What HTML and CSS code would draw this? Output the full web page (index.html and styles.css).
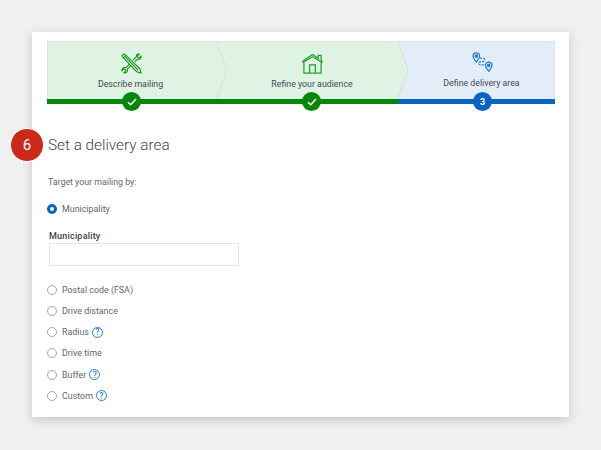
FILE: index.html
```html
<!DOCTYPE html>
<html lang="en">
<head>
<meta charset="utf-8">
<title>Set a delivery area</title>
<link rel="stylesheet" href="styles.css">
</head>
<body>
<main class="card">
  <div class="stepper">
    <svg class="stepper-bg" width="508" height="63" viewBox="0 0 508 63" aria-hidden="true">
      <rect x="0" y="0" width="508" height="58" fill="#e3edf8"/>
      <path d="M351 0L361 29L351 58H0V0Z" fill="#dff3e4"/>
      <path d="M351 0L361 29L351 58" fill="none" stroke="#d5ddd8"/>
      <path d="M169.500 0L180 29L169.500 58" fill="none" stroke="#d3e2d8"/>
      <path d="M0 .5H508M507.500 0V58" fill="none" stroke="#dde3e8"/>
      <path d="M.5 0V58" fill="none" stroke="#d6e5da"/>
      <rect x="0" y="58" width="351" height="5" fill="#078707"/>
      <rect x="351" y="58" width="157" height="5" fill="#0a64c2"/>
    </svg>
    <div class="step step-one">
      <svg class="step-icon" width="21" height="21" viewBox="0 0 24 24" fill="none" stroke="#15941a" stroke-width="1.250" stroke-linejoin="round">
        <path d="M14 8L17.500 4.500C17 2.500 18.500 1 21 1L18.800 3.300L19.300 5L21 5.500L23 3.300C23.300 6 21 8 18.800 7L15.800 10"/>
        <path d="M9.500 13L5.800 16.800C3.500 16 1 17.500 1 20.300L3.300 18.300L5 18.800L5.500 20.500L3.300 22.800C6 23.300 8 21 7.300 18.500L11 15"/>
        <path d="M3.300 1L1 3.300L2.800 5.700L5.700 2.800ZM2.800 5.700L18 21.500L23 23L21.500 18L5.700 2.800M5 4.800L19.500 19.500"/>
      </svg>
      <span class="step-label">Describe mailing</span>
      <span class="badge badge-done">
        <svg width="10" height="8" viewBox="0 0 10 8" fill="none" stroke="#fff" stroke-width="1.500"><path d="M1 4.200L3.700 6.800L9 1"/></svg>
      </span>
    </div>
    <div class="step step-two">
      <svg class="step-icon" width="21" height="21" viewBox="0 0 22 22" fill="none" stroke="#22a02c" stroke-width="1.300">
        <path d="M1 8.500L11 1.500L17 5.500V2.500H20V7.500L21 8.500"/>
        <path d="M1 10.500V8.500M21 10.500V8.500M1 9.800L11 4L21 9.800"/>
        <path d="M2 10V21H20V10"/>
        <path d="M8 21V12.500H14V21"/>
      </svg>
      <span class="step-label">Refine your audience</span>
      <span class="badge badge-done">
        <svg width="10" height="8" viewBox="0 0 10 8" fill="none" stroke="#fff" stroke-width="1.500"><path d="M1 4.200L3.700 6.800L9 1"/></svg>
      </span>
    </div>
    <div class="step step-three">
      <svg class="step-icon" width="21" height="21" viewBox="0 0 22 22" fill="none" stroke="#1f7fdc" stroke-width="1.300">
        <path d="M4.500 .8C2.300 .8 1 2.500 1 4.300C1 6.500 3.200 8.800 4.500 10.500C5.800 8.800 8 6.500 8 4.300C8 2.500 6.700 .8 4.500 .8Z"/>
        <circle cx="4.500" cy="4.300" r="1.300" fill="#1f7fdc"/>
        <path d="M17.500 10.500C15.300 10.500 14 12.200 14 14C14 16.200 16.200 18.500 17.500 20.200C18.800 18.500 21 16.200 21 14C21 12.200 19.700 10.500 17.500 10.500Z"/>
        <circle cx="17.500" cy="14" r="1.300" fill="#1f7fdc"/>
        <path d="M8 6.500H11.500C14 6.500 14 10 11.500 10H9C6.500 10 6.500 13.500 9 13.500H12.500" stroke-dasharray="2.500 1.200"/>
      </svg>
      <span class="step-label">Define delivery area</span>
      <span class="badge badge-current">3</span>
    </div>
  </div>

  <div class="heading-row">
    <span class="number">6</span>
    <h1>Set a delivery area</h1>
  </div>

  <p class="intro">Target your mailing by:</p>

  <div class="option option-first"><span class="radio radio-on"></span>Municipality</div>

  <div class="field">
    <label class="field-label" for="municipality">Municipality</label>
    <input class="field-input" id="municipality" type="text">
  </div>

  <div class="options">
    <div class="option"><span class="radio"></span>Postal code (FSA)</div>
    <div class="option"><span class="radio"></span>Drive distance</div>
    <div class="option"><span class="radio"></span>Radius<span class="help">?</span></div>
    <div class="option"><span class="radio"></span>Drive time</div>
    <div class="option"><span class="radio"></span>Buffer<span class="help">?</span></div>
    <div class="option"><span class="radio"></span>Custom<span class="help">?</span></div>
  </div>
</main>
</body>
</html>
```

FILE: styles.css
```css
* { box-sizing: border-box; }

html, body { height: 100%; }

body {
  margin: 0;
  padding: 32px;
  background: #f0f0f0;
  font-family: Roboto, "Liberation Sans", sans-serif;
  color: #5f6368;
  overflow: hidden;
}

.card {
  position: relative;
  width: 537px;
  height: 385px;
  padding: 9px 14px 0 15px;
  background: #fff;
  box-shadow: 0 3px 10px rgba(0, 0, 0, .18);
}

.stepper {
  position: relative;
  display: flex;
  width: 508px;
  height: 63px;
}

.stepper-bg {
  position: absolute;
  left: 0;
  top: 0;
}

.step {
  position: relative;
  display: flex;
  flex-direction: column;
  align-items: center;
  height: 63px;
}

.step-one { width: 169px; padding-top: 12px; }
.step-two { width: 192px; padding-top: 12px; }
.step-three { width: 147px; padding-top: 11px; }

.step-icon { display: block; }
.step-three .step-icon { margin-left: 2px; }

.step-label {
  margin-top: 4px;
  font-size: 8.800px;
  line-height: 12px;
  color: #454a4e;
  white-space: nowrap;
}

.step-one .step-label { margin-left: -2px; }

.badge {
  position: absolute;
  bottom: -7px;
  display: flex;
  align-items: center;
  justify-content: center;
  width: 19px;
  height: 19px;
  border-radius: 50%;
  color: #fff;
  font-size: 9px;
  font-weight: 700;
}

.step-one .badge { left: 75px; }
.step-two .badge { left: 86px; }
.step-three .badge { left: 65px; }

.badge-done { background: #078707; }
.badge-current { background: #0a64c2; }

.heading-row {
  position: relative;
  display: flex;
  align-items: center;
  height: 32px;
  margin-top: 25px;
  margin-left: 1px;
}

.number {
  position: absolute;
  left: -38px;
  top: -1px;
  display: flex;
  align-items: center;
  justify-content: center;
  width: 34px;
  height: 34px;
  border: 1px solid #fff;
  border-radius: 50%;
  background: #cb2a1b;
  color: #fff;
  font-size: 15px;
}

h1 {
  margin: 0;
  font-size: 15.300px;
  font-weight: 300;
  color: #3f4347;
}

.intro {
  margin: 15px 0 0 1px;
  font-size: 8.800px;
  line-height: 12px;
  color: #63676b;
}

.option {
  display: flex;
  align-items: center;
  height: 21.200px;
  font-size: 8.900px;
  color: #63676b;
}

.option-first { margin-top: 10px; }

.radio {
  flex: none;
  width: 10px;
  height: 10px;
  margin-right: 5px;
  border: 1px solid #a9a9a9;
  border-radius: 50%;
  background: #fff;
}

.radio-on {
  border: 3.500px solid #0a64c2;
}

.field {
  display: flex;
  flex-direction: column;
  margin: 11px 0 0 2px;
}

.field-label {
  font-size: 9px;
  font-weight: 500;
  line-height: 12px;
  letter-spacing: .2px;
  color: #3e4246;
}

.field-input {
  display: block;
  width: 190px;
  height: 23px;
  margin-top: 1px;
  padding: 0;
  border: 1px solid #e4e4e4;
  border-radius: 1px;
  background: #fff;
}

.options { margin-top: 13px; }

.help {
  display: flex;
  align-items: center;
  justify-content: center;
  width: 11px;
  height: 11px;
  margin-left: 3px;
  border: 1px solid #1f7fdc;
  border-radius: 50%;
  color: #1f7fdc;
  font-size: 8.500px;
  font-weight: 500;
}
```
